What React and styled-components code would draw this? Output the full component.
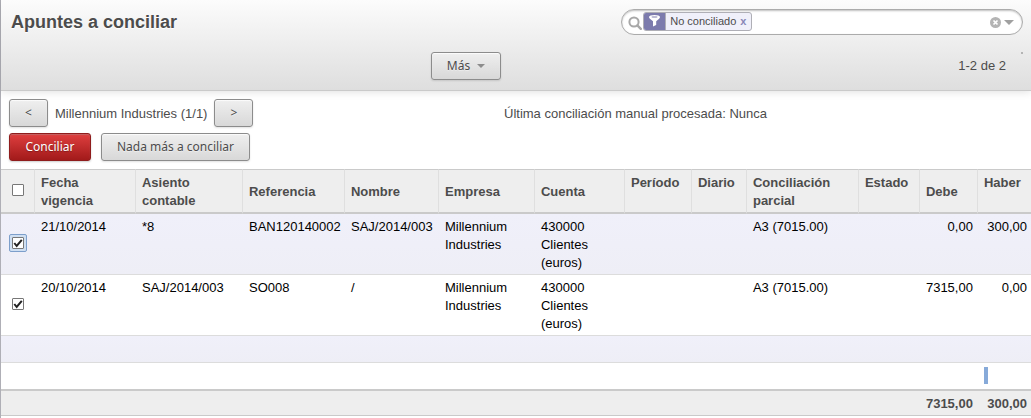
import React, { useState } from "react";
import styled, { createGlobalStyle, css } from "styled-components";

const GlobalStyle = createGlobalStyle`
  * { box-sizing: border-box; }
  body {
    margin: 0;
    background: #fff;
    color: #4c4c4c;
    font: 13px/18px "Liberation Sans", Arial, Helvetica, sans-serif;
  }
`;

const Page = styled.main`
  min-height: 100vh;
  border-left: 1px solid #afafb6;
`;

const Header = styled.header`
  height: 91px;
  padding-top: 9px;
  border-bottom: 1px solid #cacaca;
  background: linear-gradient(#fcfcfc, #dedede);
  box-shadow: 0 1px 8px rgba(0, 0, 0, 0.12);
`;

const HeaderTop = styled.div`
  display: flex;
  justify-content: space-between;
  align-items: center;
  padding: 0 8px 0 10px;
`;

const Title = styled.h1`
  margin: 0;
  font-size: 18px;
  line-height: 26px;
  font-weight: bold;
  text-shadow: 0 1px 1px #fff;
`;

const SearchBox = styled.div`
  display: flex;
  align-items: center;
  width: 39.7%;
  height: 26px;
  padding: 0 8px 0 6px;
  border: 1px solid #ababab;
  border-radius: 13px;
  background: #fff;
  box-shadow: inset 0 1px 2px rgba(0, 0, 0, 0.25);
`;

const SearchIcon = styled.svg`
  margin-top: 2px;
`;

const Facet = styled.span`
  display: flex;
  align-items: center;
  height: 19px;
  margin: 0 4px 2px 1px;
  border: 1px solid #afafb6;
  border-radius: 3px;
  background: #f0f0fa;
  overflow: hidden;
  font-size: 11px;
`;

const FacetIcon = styled.span`
  display: flex;
  align-items: center;
  justify-content: center;
  width: 22px;
  height: 100%;
  margin-right: 4px;
  border-right: 1px solid #afafb6;
  background: #7c7bad;
`;

const IconButton = styled.button`
  display: flex;
  align-items: center;
  padding: 0;
  border: 0;
  background: none;
  margin-left: ${(p) => p.$gap || 0}px;
`;

const FacetRemove = styled(IconButton)`
  padding-right: 5px;
  color: #8786b7;
  font: bold 11px/16px "Liberation Sans", Arial, sans-serif;
`;

const SearchInput = styled.input`
  flex: 1;
  min-width: 0;
  border: 0;
  outline: 0;
  padding: 0;
  background: none;
  font: inherit;
`;

const HeaderTools = styled.div`
  display: grid;
  grid-template-columns: 43fr auto 53fr;
  align-items: start;
  margin-top: 17px;
`;

const Button = styled.button`
  display: inline-flex;
  align-items: center;
  justify-content: center;
  height: 28px;
  min-width: 39px;
  padding: 0 15px;
  border: 1px solid #8c8c8c;
  border-radius: 3px;
  background: linear-gradient(#efefef, #d8d8d8);
  box-shadow: 0 1px 2px rgba(0, 0, 0, 0.12), inset 0 1px 1px rgba(255, 255, 255, 0.8);
  color: #4c4c4c;
  font: 12px/18px "Noto Sans", "Open Sans", sans-serif;
  text-shadow: 0 1px 1px rgba(255, 255, 255, 0.5);
  white-space: nowrap;
  ${(p) => p.$primary && css`
    min-width: 82px;
    border-color: #8f1c1c;
    background: linear-gradient(#df3f3f, #a21a1a);
    box-shadow: 0 1px 2px rgba(0, 0, 0, 0.2), inset 0 1px 1px rgba(155, 155, 155, 0.4);
    color: #fff;
    text-shadow: 0 1px 1px rgba(0, 0, 0, 0.3);
  `}
`;

const MoreButton = styled(Button)`
  grid-column: 2;
  gap: 7px;
`;

const Pager = styled.div`
  display: flex;
  justify-content: flex-end;
  gap: 15px;
  padding-right: 8px;
`;

const PagerCount = styled.span`
  padding-top: 5px;
`;

const PagerDot = styled.span`
  width: 2px;
  height: 2px;
  background: #b4b4b4;
`;

const Actions = styled.section`
  display: grid;
  gap: 6px;
  padding: 8px;
`;

const PartnerRow = styled.div`
  display: grid;
  grid-template-columns: 495fr 519fr;
  align-items: center;
`;

const PartnerText = styled.span`
  padding-top: 2px;
`;

const ButtonRow = styled.div`
  display: flex;
  align-items: center;
  gap: ${(p) => p.$gap}px;
`;

const Table = styled.table`
  width: 100%;
  table-layout: fixed;
  border-collapse: separate;
  border-spacing: 0;
  color: #000;
`;

const Col = styled.col`
  width: ${(p) => p.$share}%;
`;

const HeadCell = styled.th`
  height: 45px;
  padding: 4px 4px 2px 6px;
  border-top: 1px solid #cacaca;
  border-bottom: 2px solid #cacaca;
  border-left: ${(p) => (p.$first ? "0" : "1px solid #dfdfdf")};
  background: #eee;
  color: #4c4c4c;
  text-align: left;
  vertical-align: ${(p) => (p.$top ? "top" : "middle")};
`;

const BodyRow = styled.tr`
  height: ${(p) => p.$height}px;
  background: ${(p) => (p.$shaded ? "linear-gradient(#f0f0fa, #eeeef6)" : "#fff")};
`;

const Cell = styled.td`
  padding: 4px 4px 2px ${(p) => (p.$number ? 0 : 7)}px;
  border-bottom: ${(p) => (p.$last ? "0" : "1px solid #dcdcdc")};
  text-align: ${(p) => (p.$number ? "right" : "left")};
  vertical-align: top;
`;

const FootCell = styled.td`
  height: 27px;
  padding: 2px 4px 1px 0;
  border-top: 2px solid #cacaca;
  border-bottom: 1px solid #cacaca;
  background: #eee;
  color: #4c4c4c;
  font-weight: bold;
  text-align: right;
`;

const SelectHeadCell = styled(HeadCell)`
  padding: 0 0 2px 8px;
`;

const SelectCell = styled(Cell)`
  padding: 0 0 2px 8px;
  vertical-align: middle;
`;

const Marker = styled.span`
  display: block;
  width: 4px;
  height: 17px;
  background: #87aad9;
`;

const CheckLabel = styled.label`
  position: relative;
  display: flex;
  align-items: center;
  justify-content: center;
  width: 18px;
  height: 18px;
  border: 1px solid ${(p) => (p.$focused ? "#7d9fcb" : "transparent")};
  border-radius: 2px;
  background: ${(p) => (p.$focused ? "#cfdff2" : "transparent")};
  svg {
    position: absolute;
    pointer-events: none;
    visibility: hidden;
  }
  input:checked + svg {
    visibility: visible;
  }
`;

const CheckInput = styled.input`
  appearance: none;
  width: 12px;
  height: 12px;
  margin: 0;
  border: 1px solid #777;
  border-radius: 1px;
  background: #fff;
  outline: 0;
`;

function Check({ label, initial = false, focused = false }) {
  const [on, setOn] = useState(initial);
  return (
    <CheckLabel $focused={focused}>
      <CheckInput type="checkbox" aria-label={label} checked={on} onChange={() => setOn(!on)} />
      <svg width="12" height="12" viewBox="0 0 12 12" aria-hidden="true">
        <path d="M2.300 6l2.400 3L9.800 2.800" fill="none" stroke="#222" strokeWidth="2" />
      </svg>
    </CheckLabel>
  );
}

const columns = [
  { key: "date", label: "Fecha vigencia", share: 101 },
  { key: "entry", label: "Asiento contable", share: 107 },
  { key: "ref", label: "Referencia", share: 102 },
  { key: "name", label: "Nombre", share: 94 },
  { key: "partner", label: "Empresa", share: 96 },
  { key: "account", label: "Cuenta", share: 90 },
  { key: "period", label: "Período", share: 67, top: true },
  { key: "journal", label: "Diario", share: 55, top: true },
  { key: "partial", label: "Conciliación parcial", share: 112 },
  { key: "state", label: "Estado", share: 61, top: true },
  { key: "debit", label: "Debe", share: 58, number: true },
  { key: "credit", label: "Haber", share: 54, number: true, top: true },
];
const total = 1030;

const entries = [
  { date: "21/10/2014", entry: "*8", ref: "BAN120140002", name: "SAJ/2014/003", partner: "Millennium Industries", account: "430000 Clientes (euros)", partial: "A3 (7015.00)", debit: "0,00", credit: "300,00" },
  { date: "20/10/2014", entry: "SAJ/2014/003", ref: "SO008", name: "/", partner: "Millennium Industries", account: "430000 Clientes (euros)", partial: "A3 (7015.00)", debit: "7315,00", credit: "0,00" },
];

export default function App() {
  return (
    <Page>
      <GlobalStyle />
      <Header>
        <HeaderTop>
          <Title>Apuntes a conciliar</Title>
          <SearchBox>
            <SearchIcon width="14" height="14" viewBox="0 0 14 14" aria-hidden="true">
              <circle cx="6" cy="6" r="4.6" fill="none" stroke="#a8a8a8" strokeWidth="2" />
              <path d="M9.4 9.4l3.4 3.4" stroke="#a8a8a8" strokeWidth="2.4" strokeLinecap="round" />
            </SearchIcon>
            <Facet>
              <FacetIcon>
                <svg width="13" height="12" viewBox="0 0 13 12" aria-hidden="true">
                  <path fillRule="evenodd" d="M1 2C1 .7 3.3 0 6.500 0S12 .7 12 2c0 1-1 2-3.800 4.300V10L5 11.500V6.300C2 4 1 3 1 2zm2.300 0c.8.700 5.600.700 6.400 0-.8-.6-5.600-.6-6.400 0z" fill="#fff" />
                </svg>
              </FacetIcon>
              No conciliado
              <FacetRemove type="button" aria-label="Quitar filtro" $gap={4}>x</FacetRemove>
            </Facet>
            <SearchInput type="text" aria-label="Buscar" />
            <IconButton type="button" aria-label="Limpiar">
              <svg width="11" height="11" viewBox="0 0 11 11" aria-hidden="true">
                <circle cx="5.500" cy="5.500" r="5.500" fill="#b4b4b4" />
                <path d="M3.500 3.500l4 4m0-4l-4 4" stroke="#fff" strokeWidth="1.700" />
              </svg>
            </IconButton>
            <IconButton type="button" aria-label="Búsqueda avanzada" $gap={3}>
              <svg width="10" height="5" viewBox="0 0 10 5" aria-hidden="true">
                <path d="M0 0h10L5 5z" fill="#a0a0a0" />
              </svg>
            </IconButton>
          </SearchBox>
        </HeaderTop>
        <HeaderTools>
          <MoreButton type="button">
            Más
            <svg width="8" height="4" viewBox="0 0 8 4" aria-hidden="true">
              <path d="M0 0h8L4 4z" fill="#8c8c8c" />
            </svg>
          </MoreButton>
          <Pager>
            <PagerCount>1-2 de 2</PagerCount>
            <PagerDot />
          </Pager>
        </HeaderTools>
      </Header>

      <Actions>
        <PartnerRow>
          <ButtonRow $gap={7}>
            <Button type="button">&lt;</Button>
            <PartnerText>Millennium Industries (1/1)</PartnerText>
            <Button type="button">&gt;</Button>
          </ButtonRow>
          <PartnerText>Última conciliación manual procesada: Nunca</PartnerText>
        </PartnerRow>
        <ButtonRow $gap={10}>
          <Button type="button" $primary>Conciliar</Button>
          <Button type="button">Nada más a conciliar</Button>
        </ButtonRow>
      </Actions>

      <Table>
        <colgroup>
          <Col $share={(33 / total) * 100} />
          {columns.map((c) => <Col key={c.key} $share={(c.share / total) * 100} />)}
        </colgroup>
        <thead>
          <tr>
            <SelectHeadCell $first><Check label="Seleccionar todo" /></SelectHeadCell>
            {columns.map((c) => <HeadCell key={c.key} $top={c.top}>{c.label}</HeadCell>)}
          </tr>
        </thead>
        <tbody>
          {entries.map((e, i) => (
            <BodyRow key={e.date} $height={61} $shaded={i % 2 === 0}>
              <SelectCell><Check label={`Seleccionar ${e.ref}`} initial focused={i === 0} /></SelectCell>
              {columns.map((c) => <Cell key={c.key} $number={c.number}>{e[c.key]}</Cell>)}
            </BodyRow>
          ))}
          <BodyRow $height={27} $shaded>
            <Cell colSpan={13} />
          </BodyRow>
          <BodyRow $height={26}>
            <Cell colSpan={12} $last />
            <Cell $last><Marker /></Cell>
          </BodyRow>
        </tbody>
        <tfoot>
          <tr>
            <FootCell colSpan={11} />
            <FootCell>7315,00</FootCell>
            <FootCell>300,00</FootCell>
          </tr>
        </tfoot>
      </Table>
    </Page>
  );
}
